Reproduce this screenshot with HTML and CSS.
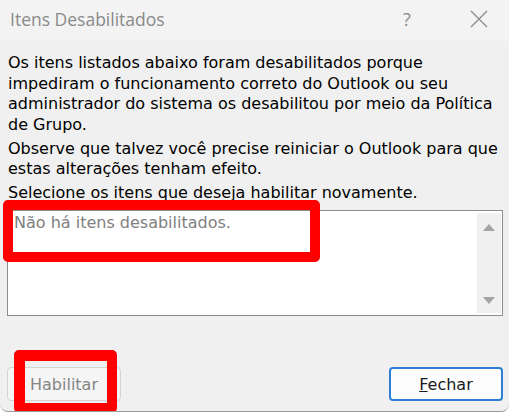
FILE: index.html
```html
<!DOCTYPE html>
<html lang="pt-BR">
<head>
<meta charset="utf-8">
<title>Itens Desabilitados</title>
<link rel="stylesheet" href="styles.css">
</head>
<body>
<div class="window">
  <div class="titlebar">
    <span class="title">Itens Desabilitados</span>
    <span class="help">?</span>
    <span class="close">
      <svg width="18" height="18" viewBox="0 0 18 18"><path d="M1 1 L17 17 M17 1 L1 17" stroke="#8c8c8c" stroke-width="1.3" fill="none"/></svg>
    </span>
  </div>
  <div class="content">
    <p class="para">Os itens listados abaixo foram desabilitados porque<br>impediram o funcionamento correto do Outlook ou seu<br>administrador do sistema os desabilitou por meio da Política<br>de Grupo.</p>
    <p class="para">Observe que talvez você precise reiniciar o Outlook para que<br>estas alterações tenham efeito.</p>
    <p class="para last">Selecione os itens que deseja habilitar novamente.</p>
    <div class="listbox">
      <div class="items">Não há itens desabilitados.</div>
      <div class="scrollbar">
        <span class="arrow up"></span>
        <span class="arrow down"></span>
      </div>
    </div>
    <div class="buttons">
      <button class="btn disabled">Habilitar</button>
      <button class="btn primary"><u>F</u>echar</button>
    </div>
  </div>
  <div class="mark mark-list"></div>
  <div class="mark mark-btn"></div>
</div>
</body>
</html>
```

FILE: styles.css
```css
html, body {
  margin: 0;
  padding: 0;
  background: #ffffff;
}

.window {
  position: relative;
  width: 509px;
  height: 411px;
  background: #f0f0f0;
  border-bottom: 1px solid #9a9a9a;
  border-radius: 0 0 8px 8px;
  overflow: hidden;
  font-family: "DejaVu Sans", Verdana, sans-serif;
}

.titlebar {
  height: 41px;
  background: #f3f3f3;
  display: flex;
  align-items: center;
}

.title {
  flex: 1;
  padding-left: 10px;
  padding-bottom: 4px;
  font-family: "Open Sans", "Noto Sans", sans-serif;
  font-size: 17.5px;
  color: #8a8a8a;
}

.help {
  font-family: "Open Sans", "Noto Sans", sans-serif;
  font-size: 18px;
  color: #8c8c8c;
  width: 20px;
  margin-right: 47px;
  padding-bottom: 4px;
}

.close {
  width: 18px;
  height: 18px;
  margin-right: 21px;
  margin-bottom: 4px;
  display: flex;
}

.content {
  padding: 12px 6px 0 7px;
}

.para {
  margin: 0 0 3.5px 1px;
  font-size: 16px;
  line-height: 20.5px;
  color: #000;
  white-space: nowrap;
}

.para.last {
  margin-bottom: 6.5px;
}

.listbox {
  height: 104px;
  border: 1px solid #8c8c8c;
  background: #fff;
  display: flex;
}

.items {
  flex: 1;
  padding: 2.5px 0 0 6px;
  font-size: 16px;
  line-height: 18px;
  color: #808080;
}

.scrollbar {
  width: 24px;
  margin: 2px 1px 2px 0;
  background: #f0f0f0;
  display: flex;
  flex-direction: column;
  justify-content: space-between;
  align-items: center;
  padding: 11px 0 9px;
}

.arrow {
  width: 0;
  height: 0;
  border-left: 6px solid transparent;
  border-right: 6px solid transparent;
}

.arrow.up {
  border-bottom: 7px solid #a3a3a3;
}

.arrow.down {
  border-top: 7px solid #a3a3a3;
}

.buttons {
  display: flex;
  justify-content: space-between;
  margin-top: 51px;
}

.btn {
  width: 114px;
  height: 34px;
  border-radius: 4px;
  font-family: "DejaVu Sans", Verdana, sans-serif;
  font-size: 16px;
  background: #fbfbfb;
}

.btn.disabled {
  border: 1px solid #d4d4d4;
  color: #858585;
  background: #f5f5f5;
}

.btn.primary {
  border: 2px solid #2d7ed6;
  color: #1a1a1a;
  background: #fdfdfd;
}

.mark {
  position: absolute;
  border: 10px solid #ff0000;
  border-radius: 5px;
}

.mark-list {
  left: 3px;
  top: 200px;
  width: 297px;
  height: 42px;
}

.mark-btn {
  left: 14px;
  top: 350px;
  width: 82px;
  height: 42px;
  border-width: 11px 10px 10px 11px;
}
```
